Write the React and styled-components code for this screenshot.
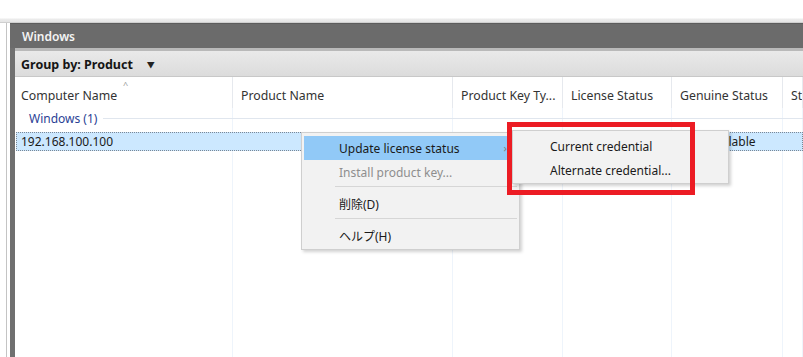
import React from "react";
import styled, { createGlobalStyle } from "styled-components";

const GlobalStyle = createGlobalStyle`
  html, body { margin: 0; padding: 0; background: #ffffff; }
  body {
    font-family: "Noto Sans", "Noto Sans CJK JP", sans-serif;
    font-size: 12px;
    color: #1a1a1a;
    overflow: hidden;
  }
  * { box-sizing: border-box; }
`;

const Page = styled.div`
  position: relative;
  width: 803px;
  height: 357px;
  display: flex;
  flex-direction: column;
  overflow: hidden;
  background: #fff;
`;

const TopStrip = styled.div`
  height: 23px;
  flex: none;
  background: linear-gradient(#ffffff 0, #ffffff 18px, #ececec 19px, #e2e2e2 23px);
  border-bottom: 1px solid #cfcfcf;
`;

const Body = styled.div`
  flex: 1;
  display: flex;
  min-height: 0;
`;

const Gutter = styled.div`
  width: 6px;
  flex: none;
  background: #fff;
`;

const GutterLine = styled.div`
  width: 1px;
  flex: none;
  background: #c4c4c4;
  margin-right: 3px;
`;

const Panel = styled.div`
  flex: 1;
  display: flex;
  flex-direction: column;
  background: #707070;
  min-width: 0;
`;

const TitleBar = styled.div`
  height: 25px;
  flex: none;
  display: flex;
  align-items: center;
  padding-left: 12px;
  color: #f4f4f4;
  font-weight: 600;
  font-size: 12px;
  background: #6b6b6b;
  border-top: 1px solid #5c5c5c;
`;

const Inner = styled.div`
  flex: 1;
  margin-left: 5px;
  display: flex;
  flex-direction: column;
  background: #fff;
  border-top: 3px solid #b9b9b9;
  min-height: 0;
`;

const GroupBar = styled.div`
  height: 26px;
  flex: none;
  display: flex;
  align-items: center;
  gap: 14px;
  padding-left: 6px;
  padding-top: 1px;
  background: linear-gradient(#e9e9e9, #dcdcdc);
  border-bottom: 1px solid #c8c8c8;
  font-weight: 700;
  font-size: 12.5px;
  color: #151515;
`;

const Caret = styled.span`
  font-size: 8px;
  color: #222;
`;

const COLS = "218px 220px 110px 109px 111px 1fr";

const HeaderRow = styled.div`
  height: 31px;
  flex: none;
  display: grid;
  grid-template-columns: ${COLS};
`;

const HeaderCell = styled.div`
  position: relative;
  display: flex;
  align-items: center;
  padding-left: ${(p) => (p.$first ? "6px" : "8px")};
  padding-top: 6px;
  color: #333;
  font-size: 12.3px;
  white-space: nowrap;
  overflow: hidden;
  border-right: 1px solid #e6e9ee;
`;

const SortArrow = styled.span`
  position: absolute;
  left: 108px;
  top: 1px;
  font-size: 9px;
  color: #9a9a9a;
`;

const ListBody = styled.div`
  flex: 1;
  display: grid;
  grid-template-columns: ${COLS};
  grid-template-rows: 20px 4px 19px 1fr;
`;

const ColumnTrack = styled.div`
  grid-row: 1 / -1;
  grid-column: ${(p) => p.$col};
  border-right: 1px solid #eef4fb;
`;

const GroupHeader = styled.div`
  grid-row: 1;
  grid-column: 1 / -1;
  display: flex;
  align-items: center;
  padding-left: 14px;
  gap: 6px;
  color: #2a3f95;
  z-index: 1;
`;

const GroupLine = styled.div`
  flex: 1;
  height: 1px;
  background: #e0e6ee;
`;

const SelectedRow = styled.div`
  grid-row: 3;
  grid-column: 1 / -1;
  display: grid;
  grid-template-columns: ${COLS};
  background: #cce8ff;
  border: 1px dotted #7b8795;
  margin-left: 1px;
  z-index: 1;
`;

const RowCell = styled.div`
  display: flex;
  align-items: center;
  padding-left: ${(p) => (p.$first ? "4px" : "8px")};
  white-space: nowrap;
  overflow: hidden;
  color: #1a1a1a;
`;

const Menu = styled.div`
  position: absolute;
  left: ${(p) => p.$left}px;
  top: ${(p) => p.$top}px;
  width: ${(p) => p.$width}px;
  padding: 3px 2px 1px;
  background: #f2f2f2;
  border: 1px solid #cfcfcf;
  box-shadow: 2px 2px 3px rgba(0, 0, 0, 0.18);
  z-index: ${(p) => p.$z};
`;

const MenuItem = styled.div`
  position: relative;
  height: 24px;
  display: flex;
  align-items: center;
  padding-left: 35px;
  background: ${(p) => (p.$active ? "#91c9f7" : "transparent")};
  color: ${(p) => (p.$disabled ? "#8e8e8e" : "#1a1a1a")};
  white-space: nowrap;
`;

const Chevron = styled.span`
  position: absolute;
  right: 10px;
  top: 4px;
  font-size: 11px;
  color: #7d7d7d;
`;

const Separator = styled.div`
  height: 8px;
  margin-left: 31px;
  padding-top: 2px;
  &::after {
    content: "";
    display: block;
    height: 1px;
    background: #d6d6d6;
  }
`;

const Highlight = styled.div`
  position: absolute;
  left: 507px;
  top: 122px;
  width: 188px;
  height: 73px;
  border: 5px solid #ec1c24;
  z-index: 5;
`;

const columns = [
  "Computer Name",
  "Product Name",
  "Product Key Ty...",
  "License Status",
  "Genuine Status",
  "Status",
];

export default function App() {
  return (
    <>
      <GlobalStyle />
      <Page>
        <TopStrip />
        <Body>
          <Gutter />
          <GutterLine />
          <Panel>
            <TitleBar>Windows</TitleBar>
            <Inner>
              <GroupBar>
                <span>Group by: Product</span>
                <Caret>▼</Caret>
              </GroupBar>
              <HeaderRow>
                {columns.map((c, i) => (
                  <HeaderCell key={c} $first={i === 0}>
                    {c}
                    {i === 0 && <SortArrow>^</SortArrow>}
                  </HeaderCell>
                ))}
              </HeaderRow>
              <ListBody>
                {[1, 2, 3, 4, 5, 6].map((c) => (
                  <ColumnTrack key={c} $col={c} />
                ))}
                <GroupHeader>
                  <span>Windows (1)</span>
                  <GroupLine />
                </GroupHeader>
                <SelectedRow>
                  <RowCell $first>192.168.100.100</RowCell>
                  <RowCell />
                  <RowCell />
                  <RowCell />
                  <RowCell>Not available</RowCell>
                  <RowCell />
                </SelectedRow>
              </ListBody>
            </Inner>
          </Panel>
        </Body>

        <Menu $left={301} $top={132} $width={219} $z={3}>
          <MenuItem $active>
            Update license status
            <Chevron>›</Chevron>
          </MenuItem>
          <MenuItem $disabled>Install product key...</MenuItem>
          <Separator />
          <MenuItem>削除(D)</MenuItem>
          <Separator />
          <MenuItem>ヘルプ(H)</MenuItem>
        </Menu>

        <Menu $left={512} $top={130} $width={217} $z={4}>
          <MenuItem>Current credential</MenuItem>
          <MenuItem>Alternate credential...</MenuItem>
        </Menu>

        <Highlight />
      </Page>
    </>
  );
}
